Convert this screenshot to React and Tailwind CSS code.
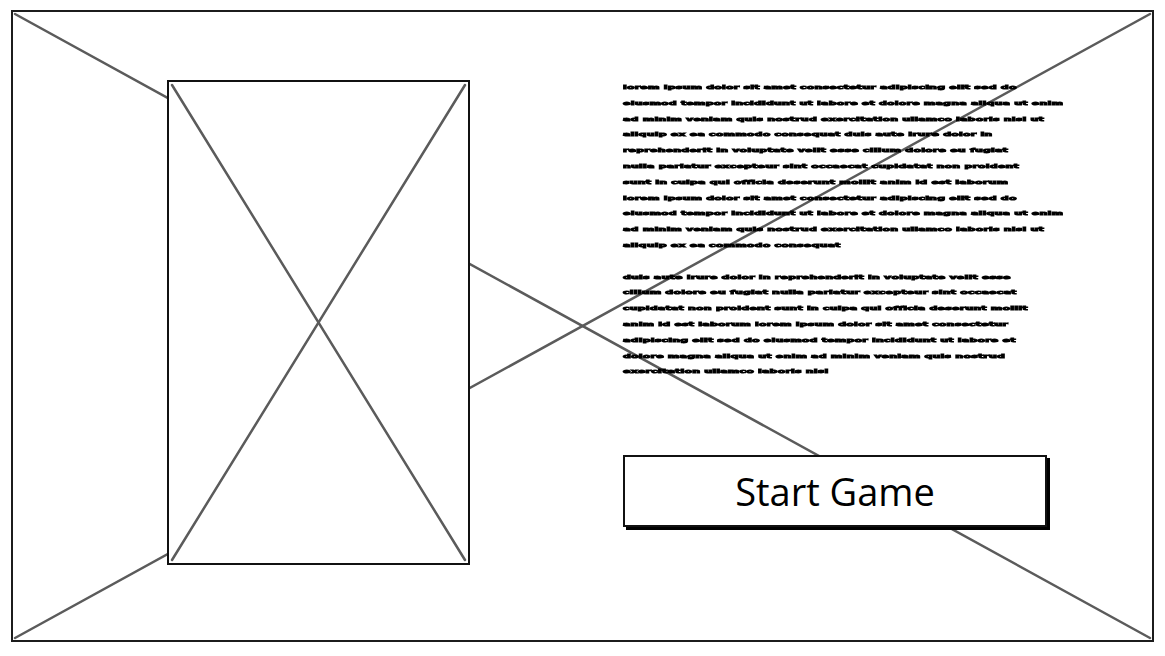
const para1 = [
  "lorem ipsum dolor sit amet consectetur adipiscing elit sed do",
  "eiusmod tempor incididunt ut labore et dolore magna aliqua ut enim",
  "ad minim veniam quis nostrud exercitation ullamco laboris nisi ut",
  "aliquip ex ea commodo consequat duis aute irure dolor in",
  "reprehenderit in voluptate velit esse cillum dolore eu fugiat",
  "nulla pariatur excepteur sint occaecat cupidatat non proident",
  "sunt in culpa qui officia deserunt mollit anim id est laborum",
  "lorem ipsum dolor sit amet consectetur adipiscing elit sed do",
  "eiusmod tempor incididunt ut labore et dolore magna aliqua ut enim",
  "ad minim veniam quis nostrud exercitation ullamco laboris nisi ut",
  "aliquip ex ea commodo consequat",
];

const para2 = [
  "duis aute irure dolor in reprehenderit in voluptate velit esse",
  "cillum dolore eu fugiat nulla pariatur excepteur sint occaecat",
  "cupidatat non proident sunt in culpa qui officia deserunt mollit",
  "anim id est laborum lorem ipsum dolor sit amet consectetur",
  "adipiscing elit sed do eiusmod tempor incididunt ut labore et",
  "dolore magna aliqua ut enim ad minim veniam quis nostrud",
  "exercitation ullamco laboris nisi",
];

// redacted lorem ipsum, drawn as squashed heavy text
function Scribble({ lines }) {
  return (
    <div className="flex flex-col">
      {lines.map((line, i) => (
        <div key={i} className="h-[15.8px] leading-[15.8px] whitespace-nowrap">
          <span className="inline-block origin-center scale-y-[0.44] font-['DejaVu_Sans',sans-serif] text-[11px] font-bold tracking-[0.2px] text-black [-webkit-text-stroke:1.8px_#000] blur-[0.3px]">
            {line}
          </span>
        </div>
      ))}
    </div>
  );
}

function Cross({ w, h, inset }) {
  return (
    <svg className="absolute inset-0 h-full w-full" width={w} height={h}>
      <line x1={inset} y1={inset} x2={w - inset} y2={h - inset} stroke="#5b5b5b" strokeWidth="2.5" strokeLinecap="round" />
      <line x1={w - inset} y1={inset} x2={inset} y2={h - inset} stroke="#5b5b5b" strokeWidth="2.5" strokeLinecap="round" />
    </svg>
  );
}

export default function App() {
  return (
    <div className="h-[656px] w-[1165px] overflow-hidden bg-white">
      <div className="relative ml-[11px] mt-[10px] h-[632px] w-[1143px] border-2 border-[#1c1c1c]">
        <Cross w={1139} h={628} inset={2} />
        <div className="relative flex pl-[154px] pt-[66px]">
          <div className="relative mt-[2px] h-[485px] w-[303px] shrink-0 border-2 border-[#111] bg-white">
            <Cross w={299} h={481} inset={3} />
          </div>
          <div className="ml-[153px] flex w-[430px] flex-col">
            <Scribble lines={para1} />
            <div className="h-[15.8px]" />
            <Scribble lines={para2} />
            <button className="mt-[77px] flex h-[72px] w-[424px] items-center justify-center border-2 border-[#111] bg-white font-['Open_Sans',sans-serif] text-[38px] font-medium text-black shadow-[3px_3px_0_0_#000]">
              Start Game
            </button>
          </div>
        </div>
      </div>
    </div>
  );
}
